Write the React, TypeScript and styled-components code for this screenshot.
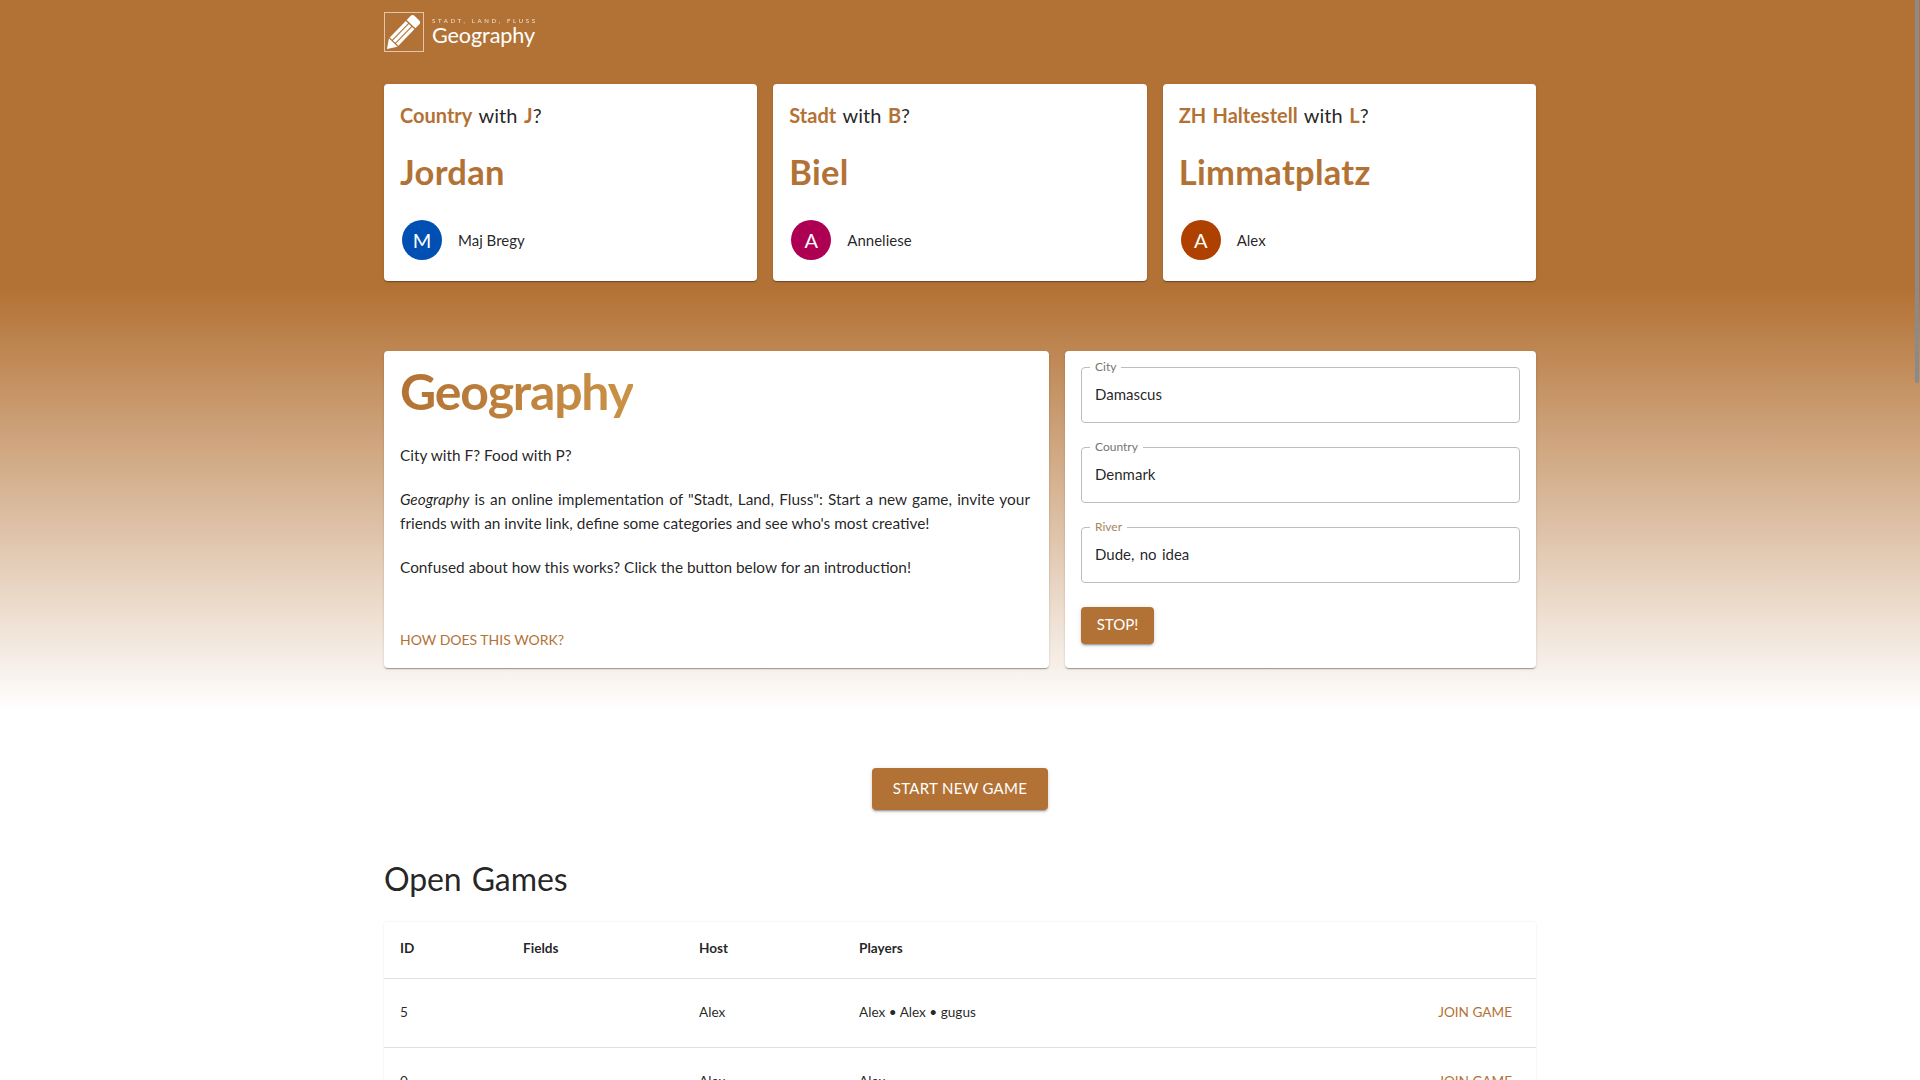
import React from "react";
import styled, { createGlobalStyle } from "styled-components";

const FONT = `Lato, "Noto Sans", "Liberation Sans", sans-serif`;
const BRAND = "#b37235";
const INK = "rgba(0,0,0,0.87)";

const Global = createGlobalStyle`
  html, body { margin: 0; padding: 0; height: 1080px; overflow: hidden; }
  body {
    font-family: ${FONT};
    color: ${INK};
    background: linear-gradient(${BRAND} 290px, #fff 712px) no-repeat;
  }
  * { box-sizing: border-box; }
`;

const Page = styled.div`
  width: 1152px;
  margin: 0 auto;
  padding-top: 12px;
`;
const Header = styled.header`
  display: flex;
  align-items: center;
  gap: 8px;
  height: 40px;
`;
const LogoBox = styled.svg`
  width: 40px;
  height: 40px;
  display: block;
  flex: none;
`;
const LogoText = styled.div`
  color: #fff;
  display: flex;
  flex-direction: column;
`;
const Tagline = styled.span`
  font-size: 6px;
  line-height: 7px;
  letter-spacing: 2.7px;
  white-space: nowrap;
  opacity: 0.8;
`;
const LogoName = styled.span`
  font-size: 21.6px;
  line-height: 23px;
  font-weight: 400;
  letter-spacing: -0.1px;
`;
const Card = styled.div`
  background: #fff;
  border-radius: 4px;
  box-shadow: 0 2px 1px -1px rgba(0,0,0,.2), 0 1px 1px 0 rgba(0,0,0,.14), 0 1px 3px 0 rgba(0,0,0,.12);
`;
const AnswerGrid = styled.section`
  display: grid;
  grid-template-columns: repeat(3, 1fr);
  column-gap: 16px;
  margin-top: 32px;
`;
const AnswerCard = styled(Card)`
  height: 197px;
  padding: 16px;
`;
const Question = styled.h5`
  margin: 0;
  font-size: 20px;
  line-height: 30px;
  font-weight: 400;
  word-spacing: 1.5px;
`;
const Accent = styled.span`
  color: ${BRAND};
  font-weight: 700;
`;
const Answer = styled.h4`
  margin: 21px 0 0;
  font-size: 34.5px;
  line-height: 42px;
  font-weight: 700;
  color: ${BRAND};
  letter-spacing: 0.3px;
`;
const Player = styled.div`
  display: flex;
  align-items: center;
  gap: 16px;
  margin: 27px 0 0 2px;
`;
const Avatar = styled.div<{ $bg: string }>`
  width: 40px;
  height: 40px;
  border-radius: 50%;
  background: ${(p) => p.$bg};
  color: #fff;
  font-size: 20px;
  display: flex;
  align-items: center;
  justify-content: center;
`;
const PlayerName = styled.span`
  font-size: 15px;
`;
const IntroGrid = styled.section`
  display: grid;
  grid-template-columns: 665px 471px;
  column-gap: 16px;
  margin-top: 70px;
`;
const IntroCard = styled(Card)`
  height: 317px;
  padding: 0 16px;
  display: flex;
  flex-direction: column;
`;
const IntroTitle = styled.h2`
  margin: 0;
  align-self: flex-start;
  background: linear-gradient(90deg, ${BRAND}, #c99246);
  -webkit-background-clip: text;
  background-clip: text;
  color: transparent;
  font-size: 50px;
  line-height: 80px;
  font-weight: 700;
  letter-spacing: -1.2px;
`;
const Paragraph = styled.p`
  margin: 12px 3px 0 0;
  font-size: 15.4px;
  line-height: 24px;
  text-align: justify;
  & + & { margin-top: 20px; }
`;
const TextLink = styled.a`
  margin-top: auto;
  margin-bottom: 16px;
  color: ${BRAND};
  font-size: 14px;
  line-height: 24px;
  text-transform: uppercase;
`;
const FormCard = styled(Card)`
  height: 317px;
  padding: 16px;
  display: flex;
  flex-direction: column;
  gap: 24px;
`;
const Field = styled.div`
  height: 56px;
  padding: 0 13px;
  border: 1px solid #bdbdbd;
  border-radius: 4px;
  position: relative;
  display: flex;
  align-items: center;
`;
const FieldLabel = styled.label<{ $active?: boolean }>`
  position: absolute;
  top: -9px;
  left: 8px;
  padding: 0 5px;
  background: #fff;
  font-size: 12px;
  line-height: 15px;
  color: ${(p) => (p.$active ? "#a8845f" : "#757575")};
`;
const Value = styled.div`
  font-size: 15px;
  line-height: 24px;
  word-spacing: 1.5px;
  margin-top: -2px;
`;
const Button = styled.button`
  align-self: flex-start;
  border: 0;
  border-radius: 4px;
  background: ${BRAND};
  color: #fff;
  font-family: ${FONT};
  font-size: 14px;
  padding: 0 16px;
  text-transform: uppercase;
  box-shadow: 0 3px 1px -2px rgba(0,0,0,.2), 0 2px 2px 0 rgba(0,0,0,.14), 0 1px 5px 0 rgba(0,0,0,.12);
`;
const StopButton = styled(Button)`
  height: 37px;
  width: 73px;
  padding: 0 0 3px;
  font-size: 15px;
`;
const StartRow = styled.div`
  display: flex;
  justify-content: center;
  margin-top: 100px;
`;
const StartButton = styled(Button)`
  align-self: auto;
  width: 176px;
  height: 42px;
  padding: 0 0 2px;
  font-size: 15px;
  letter-spacing: 0.3px;
`;
const SectionTitle = styled.h4`
  margin: 48px 0 0;
  font-size: 32px;
  line-height: 42px;
  font-weight: 400;
  word-spacing: 2px;
  letter-spacing: -0.1px;
`;
const TableCard = styled(Card)`
  margin-top: 22px;
  box-shadow: 0 0 3px rgba(0,0,0,.08);
`;
const Table = styled.table`
  width: 100%;
  border-collapse: collapse;
  table-layout: fixed;
  font-size: 13.6px;
`;
const Th = styled.th<{ $w?: number }>`
  text-align: left;
  font-weight: 700;
  height: 56px;
  padding: 0 0 3px 16px;
  border-bottom: 1px solid #e0e0e0;
  width: ${(p) => (p.$w ? `${p.$w}px` : "auto")};
`;
const Td = styled.td`
  height: 69px;
  padding: 0 0 2px 16px;
  border-bottom: 1px solid #e0e0e0;
`;
const ActionTd = styled(Td)`
  text-align: right;
  padding-right: 24px;
  color: ${BRAND};
  text-transform: uppercase;
`;
const Thumb = styled.div`
  position: fixed;
  top: 0;
  right: 1px;
  width: 4px;
  height: 383px;
  background: #8a8a8a;
  border-radius: 0 0 2px 2px;
`;

const PencilLogo = () => (
  <LogoBox viewBox="0 0 40 40">
    <rect x="0.5" y="0.5" width="39" height="39" fill="none" stroke="#fff" strokeOpacity="0.6" />
    <g transform="translate(3 37) rotate(-46)" fill="#fff">
      <polygon points="0,0 9,-6 9,6" />
      <rect x="10.2" y="-6" width="23" height="3.3" />
      <rect x="10.2" y="-1.65" width="23" height="3.3" />
      <rect x="10.2" y="2.7" width="23" height="3.3" />
      <path d="M34.6 -6h5.4a3 3 0 0 1 3 3v6a3 3 0 0 1 -3 3h-5.4z" />
    </g>
  </LogoBox>
);

const answers = [
  { cat: "Country", l: "J", a: "Jordan", n: "Maj Bregy", i: "M", c: "#0050b3" },
  { cat: "Stadt", l: "B", a: "Biel", n: "Anneliese", i: "A", c: "#ad0052" },
  { cat: "ZH Haltestell", l: "L", a: "Limmatplatz", n: "Alex", i: "A", c: "#ae4100" },
];
const fields = [
  { l: "City", v: "Damascus" },
  { l: "Country", v: "Denmark" },
  { l: "River", v: "Dude, no idea", active: true },
];
const games = [
  { id: "5", host: "Alex", players: "Alex • Alex • gugus" },
  { id: "0", host: "Alex", players: "Alex" },
];

export default function App() {
  return (
    <>
      <Global />
      <Page>
        <Header>
          <PencilLogo />
          <LogoText>
            <Tagline>STADT, LAND, FLUSS</Tagline>
            <LogoName>Geography</LogoName>
          </LogoText>
        </Header>
        <AnswerGrid>
          {answers.map((x) => (
            <AnswerCard key={x.a}>
              <Question>
                <Accent>{x.cat}</Accent> with <Accent>{x.l}</Accent>?
              </Question>
              <Answer>{x.a}</Answer>
              <Player>
                <Avatar $bg={x.c}>{x.i}</Avatar>
                <PlayerName>{x.n}</PlayerName>
              </Player>
            </AnswerCard>
          ))}
        </AnswerGrid>
        <IntroGrid>
          <IntroCard>
            <IntroTitle>Geography</IntroTitle>
            <Paragraph>City with F? Food with P?</Paragraph>
            <Paragraph>
              <em>Geography</em> is an online implementation of "Stadt, Land, Fluss": Start a new game, invite your
              friends with an invite link, define some categories and see who's most creative!
            </Paragraph>
            <Paragraph>Confused about how this works? Click the button below for an introduction!</Paragraph>
            <TextLink>How does this work?</TextLink>
          </IntroCard>
          <FormCard>
            {fields.map((f) => (
              <Field key={f.l}>
                <FieldLabel $active={f.active}>{f.l}</FieldLabel>
                <Value>{f.v}</Value>
              </Field>
            ))}
            <StopButton>Stop!</StopButton>
          </FormCard>
        </IntroGrid>
        <StartRow>
          <StartButton>Start new game</StartButton>
        </StartRow>
        <SectionTitle>Open Games</SectionTitle>
        <TableCard>
          <Table>
            <thead>
              <tr>
                <Th $w={123}>ID</Th>
                <Th $w={176}>Fields</Th>
                <Th $w={160}>Host</Th>
                <Th $w={300}>Players</Th>
                <Th />
              </tr>
            </thead>
            <tbody>
              {games.map((g) => (
                <tr key={g.id}>
                  <Td>{g.id}</Td>
                  <Td />
                  <Td>{g.host}</Td>
                  <Td>{g.players}</Td>
                  <ActionTd>Join game</ActionTd>
                </tr>
              ))}
            </tbody>
          </Table>
        </TableCard>
      </Page>
      <Thumb />
    </>
  );
}
